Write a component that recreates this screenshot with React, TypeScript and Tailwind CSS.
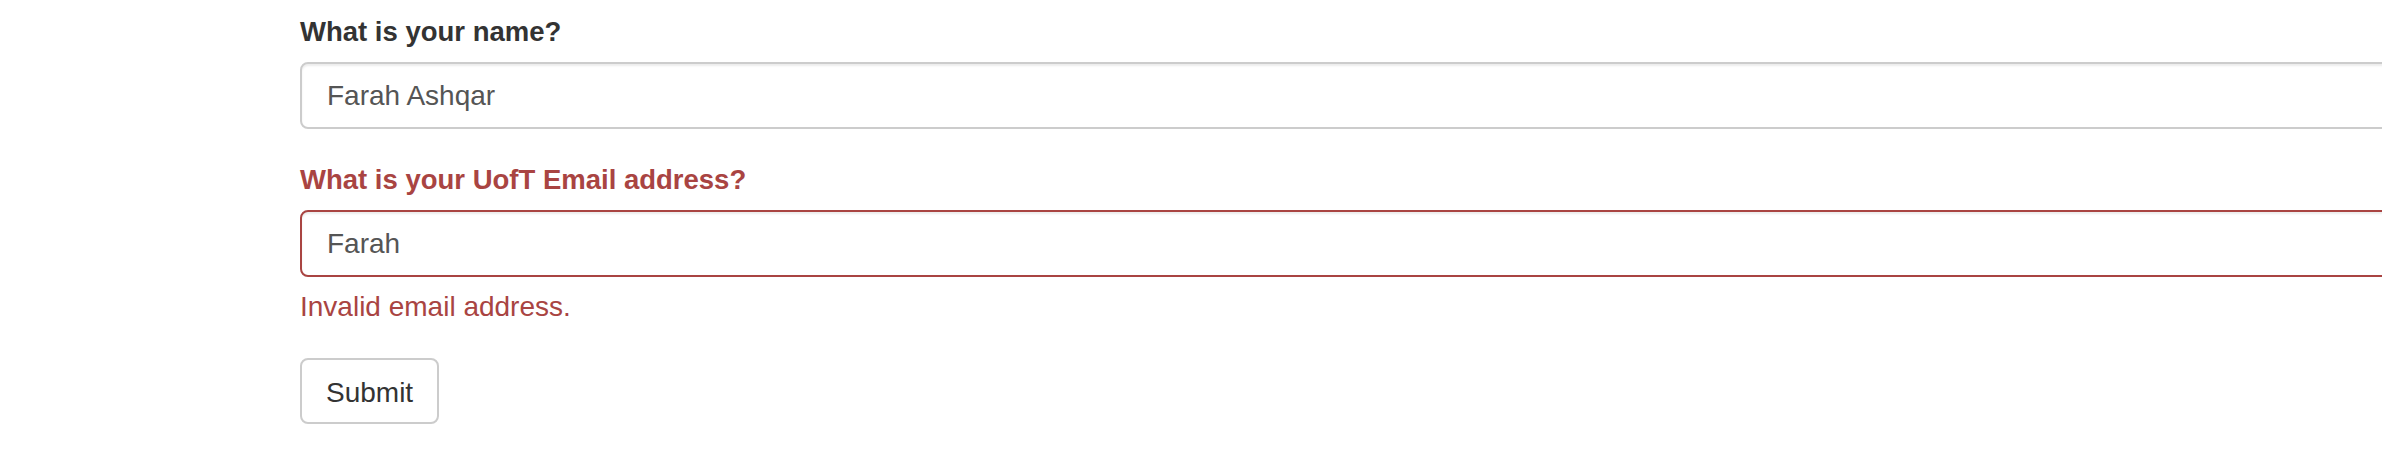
import { useState } from 'react'

const App = () => {
  const [name, setName] = useState('Farah Ashqar')
  const [email, setEmail] = useState('Farah')

  return (
    <div className="w-full h-[462px] overflow-hidden bg-white" style={{ fontFamily: '"Liberation Sans", Arial, sans-serif' }}>
      <form className="ml-[300px] w-[2300px] pt-[12px] flex flex-col items-start" onSubmit={e => e.preventDefault()}>
        <label className="text-[27.5px] leading-[40px] font-bold text-[#333333] mb-[10px]">What is your name?</label>
        <input
          value={name}
          onChange={e => setName(e.target.value)}
          className="w-full h-[67px] px-[25px] text-[28px] leading-[40px] text-[#555555] border-2 border-[#cccccc] rounded-[8px] shadow-[inset_0_2px_2px_rgba(0,0,0,0.075)] outline-none"
        />

        <label className="mt-[31px] text-[27.5px] leading-[40px] font-bold text-[#a94442] mb-[10px]">What is your UofT Email address?</label>
        <input
          value={email}
          onChange={e => setEmail(e.target.value)}
          className="w-full h-[67px] px-[25px] text-[28px] leading-[40px] text-[#555555] border-2 border-[#a94442] rounded-[8px] shadow-[inset_0_2px_2px_rgba(0,0,0,0.075)] outline-none"
        />
        <p className="mt-[10px] text-[28px] leading-[40px] text-[#a94442]">Invalid email address.</p>

        <button
          type="submit"
          className="mt-[31px] h-[66px] px-[24px] pt-[3px] text-[28px] leading-[40px] text-[#333333] bg-white border-2 border-[#cccccc] rounded-[8px]"
        >
          Submit
        </button>
      </form>
    </div>
  )
}

export default App
